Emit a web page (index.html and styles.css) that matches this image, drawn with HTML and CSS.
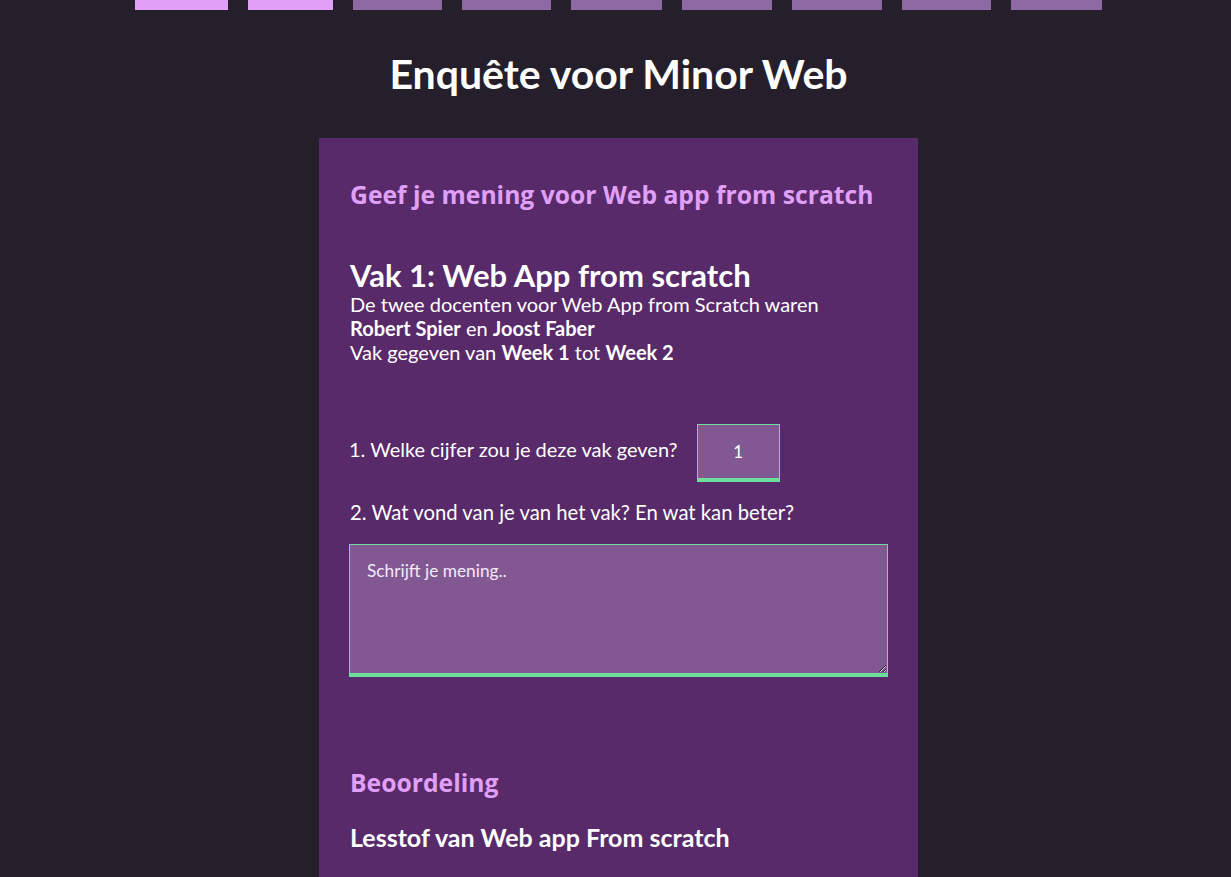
FILE: index.html
```html
<!DOCTYPE html>
<html lang="nl">
<head>
<meta charset="utf-8">
<title>Enquête voor Minor Web</title>
<link rel="stylesheet" href="styles.css">
</head>
<body>
<nav class="progress">
  <span class="step step-done w93"></span>
  <span class="step step-done w85"></span>
  <span class="step w89"></span>
  <span class="step w89"></span>
  <span class="step w91"></span>
  <span class="step w90"></span>
  <span class="step w90"></span>
  <span class="step w89"></span>
  <span class="step w91"></span>
</nav>
<h1 class="title">Enquête voor Minor Web</h1>
<main class="card">
  <h2 class="section-title">Geef je mening voor Web app from scratch</h2>
  <h3 class="course-title">Vak 1: Web App from scratch</h3>
  <p class="course-info">De twee docenten voor Web App from Scratch waren<br><strong>Robert Spier</strong> en <strong>Joost Faber</strong><br>Vak gegeven van <strong>Week 1</strong> tot <strong>Week 2</strong></p>
  <div class="question-row">
    <label class="question q-inline" for="cijfer">1. Welke cijfer zou je deze vak geven?</label>
    <input class="grade" id="cijfer" type="number" value="1">
  </div>
  <label class="question q-block" for="mening">2. Wat vond van je van het vak? En wat kan beter?</label>
  <textarea class="opinion" id="mening" placeholder="Schrijft je mening.."></textarea>
  <h2 class="section-title rating-title">Beoordeling</h2>
  <h4 class="sub-title">Lesstof van Web app From scratch</h4>
</main>
</body>
</html>
```

FILE: styles.css
```css
html, body {
  margin: 0;
  padding: 0;
}
body {
  background: #241f2b;
  color: #ffffff;
  font-family: "Lato", "Noto Sans", sans-serif;
  padding-left: 6px;
  height: 877px;
  overflow: hidden;
  box-sizing: border-box;
}
.progress {
  display: flex;
  justify-content: center;
  gap: 20px;
  height: 10px;
}
.step {
  display: block;
  height: 10px;
  background: #8e68a2;
}
.step-done { background: #e0a0f8; }
.w93 { width: 93px; }
.w85 { width: 85px; }
.w89 { width: 89px; }
.w90 { width: 90px; }
.w91 { width: 91px; }

.title {
  margin: 40px 0 40px;
  text-align: center;
  font-size: 41px;
  line-height: 48px;
  font-weight: 700;
}
.card {
  width: 599px;
  box-sizing: border-box;
  margin: 0 auto;
  background: #582a69;
  padding: 41px 30px 40px 31px;
  min-height: 800px;
}
.section-title {
  margin: 0;
  color: #e0a0f8;
  font-family: "Open Sans", sans-serif;
  font-size: 24.7px;
  line-height: 32px;
  font-weight: 700;
}
.course-title {
  margin: 47px 0 0;
  font-size: 31px;
  line-height: 34px;
  font-weight: 700;
}
.course-info {
  margin: 0;
  font-size: 20px;
  line-height: 24px;
}
.course-info strong { font-weight: 700; }
.question-row {
  display: flex;
  align-items: flex-start;
  gap: 19px;
  margin-top: 60px;
}
.question {
  font-size: 20px;
  line-height: 24px;
}
.q-inline { margin-top: 13px; margin-left: -1px; }
.q-block { display: block; margin-top: 18px; font-size: 20.3px; }
.grade {
  width: 83px;
  height: 58px;
  box-sizing: border-box;
  background: #815892;
  border: 1px solid #6ddf9c;
  border-bottom-width: 4px;
  color: #fff;
  font-family: "Lato", sans-serif;
  font-size: 17px;
  text-align: center;
  padding: 0;
  border-radius: 0;
  -moz-appearance: textfield;
  appearance: textfield;
}
.grade::-webkit-inner-spin-button,
.grade::-webkit-outer-spin-button {
  -webkit-appearance: none;
  margin: 0;
}
.opinion {
  display: block;
  margin-top: 20px;
  margin-left: -1px;
  width: 539px;
  height: 133px;
  box-sizing: border-box;
  background: #815892;
  border: 1px solid #6ddf9c;
  border-bottom-width: 4px;
  color: #fff;
  font-family: "Lato", sans-serif;
  font-size: 17.3px;
  line-height: 20px;
  padding: 16px 17px;
  border-radius: 0;
}
.opinion::placeholder { color: #f4eaf8; opacity: 1; }
.rating-title { margin-top: 90px; }
.sub-title {
  margin: 24px 0 0;
  font-size: 25px;
  line-height: 28px;
  font-weight: 700;
}
```
